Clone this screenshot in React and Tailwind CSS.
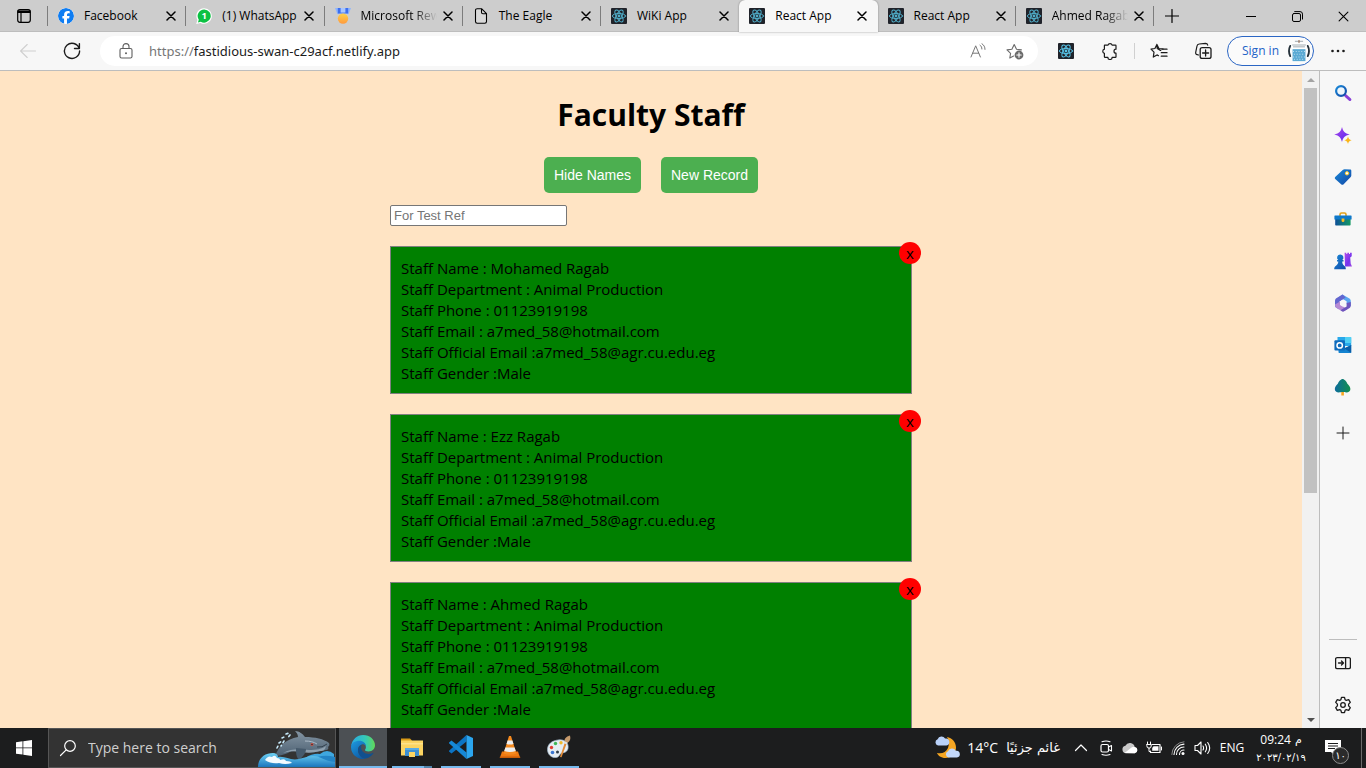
import React, { useState } from "react";
import { FaFacebook } from "react-icons/fa6";

/* ---------- small shared glyphs ---------- */

const Svg = ({ size = 20, box = "0 0 20 20", children, className = "" }) => (
  <svg
    width={size}
    height={size}
    viewBox={box}
    fill="none"
    stroke="currentColor"
    strokeLinecap="round"
    strokeLinejoin="round"
    aria-hidden="true"
    className={`shrink-0 ${className}`}
  >
    {children}
  </svg>
);

const Cross = ({ size = 10, width = 1.5 }) => (
  <Svg size={size} box="0 0 10 10">
    <path d="M1 1l8 8M9 1l-8 8" strokeWidth={width} />
  </Svg>
);

const ReactMark = ({ color = "#50adc8" }) => (
  <Svg size={16} box="0 0 16 16">
    <rect width="16" height="16" rx="1" fill="#20232a" stroke="none" />
    <g stroke={color} strokeWidth="1">
      <ellipse cx="8" cy="8" rx="6.6" ry="2.6" />
      <ellipse cx="8" cy="8" rx="6.6" ry="2.6" transform="rotate(60 8 8)" />
      <ellipse cx="8" cy="8" rx="6.6" ry="2.6" transform="rotate(120 8 8)" />
    </g>
    <circle cx="8" cy="8" r="1.4" fill={color} stroke="none" />
  </Svg>
);

const WhatsAppMark = () => (
  <Svg size={16} box="0 0 16 16">
    <path d="M8.1 0.2a7.8 7.8 0 1 1-3.7 14.7L0.2 15.9l1.2-4A7.8 7.8 0 0 1 8.1.2z" fill="#fff" stroke="none" />
    <path d="M8.2 1.4a6.6 6.6 0 1 1-3.4 12.3l-2.9.7.9-2.7A6.6 6.6 0 0 1 8.2 1.4z" fill="#0cc143" stroke="none" />
    <text x="8.1" y="11.3" textAnchor="middle" fontSize="9.5" fontWeight="700" fontFamily="Open Sans, sans-serif" fill="#fff" stroke="none">
      1
    </text>
  </Svg>
);

const MedalMark = () => (
  <Svg size={16} box="0 0 16 16">
    <defs>
      <linearGradient id="medal" x1="0" y1="0" x2="0" y2="1">
        <stop offset="0" stopColor="#ffd24a" />
        <stop offset="1" stopColor="#ff9a3d" />
      </linearGradient>
    </defs>
    <g stroke="none">
      <path d="M0 0h4.500v6L2.400 6z" fill="#8fb6ff" />
      <path d="M16 0h-4.500v6h2.100z" fill="#8fb6ff" />
      <path d="M2.800 0h10.400v5.500H2.800z" fill="#3d6fee" />
      <path d="M5.600 0h4.800v4.600H5.600z" fill="#a9c6ff" />
      <circle cx="8" cy="10.600" r="5.200" fill="url(#medal)" />
    </g>
  </Svg>
);

const PageMark = () => (
  <Svg size={16} box="0 0 16 16">
    <path d="M8.500.7H4.200C3.200.7 2.500 1.400 2.500 2.400v11.200c0 1 .7 1.700 1.700 1.700h7.600c1 0 1.700-.7 1.700-1.700V5.700zM8.500.7v3.600c0 .8.600 1.400 1.400 1.400h3.600" strokeWidth="1.100" fill="#d9d9d9" />
  </Svg>
);

/* ---------- browser chrome ---------- */

const tabs = [
  { title: "Facebook", icon: <FaFacebook size={16} color="#0f7df2" className="shrink-0 rounded-full bg-white" /> },
  { title: "(1) WhatsApp", icon: <WhatsAppMark /> },
  { title: "Microsoft Rew", icon: <MedalMark />, fade: true },
  { title: "The Eagle", icon: <PageMark /> },
  { title: "WiKi App", icon: <ReactMark /> },
  { title: "React App", icon: <ReactMark />, active: true },
  { title: "React App", icon: <ReactMark />, noDivider: true },
  { title: "Ahmed Ragab", icon: <ReactMark />, fade: true },
];

function Tab({ title, icon, active, fade, noDivider }) {
  return (
    <li
      className={`relative flex h-8 min-w-0 flex-1 items-center pl-[10px] ${
        active ? "z-10 rounded-t-md bg-[#f7f7f7] shadow-[0_0_2px_rgba(0,0,0,0.4)]" : "shadow-[inset_0_-1px_0_#bdbdbd]"
      }`}
    >
      {!active && !noDivider && <span className="absolute -left-px top-[6px] h-5 w-px bg-[#7c7c7c]" />}
      <a href="#tab" className="flex min-w-0 items-center gap-[10px]">
        {icon}
        <span
          className={`w-20 whitespace-nowrap text-[12px] leading-4 ${
            fade ? "[mask-image:linear-gradient(to_right,#000_65%,transparent_95%)]" : ""
          }`}
        >
          {title}
        </span>
      </a>
      <button aria-label={`Close ${title}`} className="ml-[2px]">
        <Cross />
      </button>
    </li>
  );
}

function TabStrip() {
  return (
    <header className="flex h-8 shrink-0 bg-[#cdcdcd] text-black">
      <button aria-label="Tab actions" className="flex w-12 shrink-0 items-center justify-center shadow-[inset_0_-1px_0_#bdbdbd]">
        <Svg size={14} box="0 0 14 14">
          <rect x="0.700" y="0.700" width="12.600" height="12.600" rx="2.200" strokeWidth="1.200" />
          <path d="M1 2.200h12M1 3.400h12" strokeWidth="1.300" />
          <path d="M4 4v9" strokeWidth="1.200" />
        </Svg>
      </button>
      <ul className="flex w-[1106px] shrink">
        {tabs.map((t, i) => (
          <Tab key={i} {...t} />
        ))}
      </ul>
      <div className="flex flex-1 items-center justify-between shadow-[inset_0_-1px_0_#bdbdbd]">
        <button aria-label="New tab" className="relative flex h-8 w-9 items-center justify-center">
          <span className="absolute -left-px top-[6px] h-5 w-px bg-[#7c7c7c]" />
          <Svg size={14} box="0 0 14 14">
            <path d="M7 .5v13M.5 7h13" strokeWidth="1.200" />
          </Svg>
        </button>
        <div className="flex">
          <button aria-label="Minimize" className="flex h-8 w-[46px] items-center justify-center">
            <Svg size={10} box="0 0 10 10">
              <path d="M0 5.500h10" strokeWidth="1" />
            </Svg>
          </button>
          <button aria-label="Restore" className="flex h-8 w-[46px] items-center justify-center">
            <Svg size={11} box="0 0 11 11">
              <rect x="0.500" y="2.500" width="8" height="8" rx="1.500" />
              <path d="M2.700.6h5.300a2.500 2.500 0 0 1 2.500 2.500v5" />
            </Svg>
          </button>
          <button aria-label="Close window" className="flex h-8 w-[46px] items-center justify-center">
            <Cross size={11} width={1} />
          </button>
        </div>
      </div>
    </header>
  );
}

const IconButton = ({ label, className = "", children }) => (
  <button aria-label={label} className={`flex h-[30px] w-11 shrink-0 items-center justify-center ${className}`}>
    {children}
  </button>
);

function Toolbar() {
  const [url, setUrl] = useState("fastidious-swan-c29acf.netlify.app");
  return (
    <nav className="flex h-[39px] shrink-0 items-center border-b border-[#bdbdbd] bg-[#f7f7f7] pl-[6px] text-[#1b1b1b]">
      <IconButton label="Back" className="text-[#cfcfcf]">
        <Svg size={16} box="0 0 16 16">
          <path d="M15.500 8H.6M7.200 1.500L.6 8l6.600 6.500" strokeWidth="1.100" />
        </Svg>
      </IconButton>
      <IconButton label="Refresh">
        <Svg size={18} box="0 0 18 18">
          <path d="M16.200 6.400A7.600 7.600 0 1 0 16.600 9M16.400 1.600v4.900h-4.900" strokeWidth="1.400" />
        </Svg>
      </IconButton>
      <div className="ml-[6px] flex h-[30px] flex-1 items-center rounded-full bg-white pl-[18px] pr-[14px] font-['Noto_Sans','Open_Sans',sans-serif]">
        <Svg size={16} box="0 0 16 16" className="text-[#5f5f5f]">
          <rect x="2" y="5.500" width="12" height="9.500" rx="1.600" strokeWidth="1.100" />
          <path d="M5 5.300V3.600a3 3 0 0 1 6 0v1.700" strokeWidth="1.100" />
          <circle cx="8" cy="10.200" r="1" fill="currentColor" stroke="none" />
        </Svg>
        <label htmlFor="address" className="ml-[15px] text-[13px] leading-5 text-[#767676]">
          https://
        </label>
        <input
          id="address"
          value={url}
          onChange={(e) => setUrl(e.target.value)}
          className="min-w-0 flex-1 bg-transparent text-[13px] leading-5 text-[#1b1b1b] outline-none"
        />
        <button aria-label="Read aloud" className="text-[#767676]">
          <Svg size={16} box="0 0 16 16">
            <path d="M1 14L5.700 2.800 10.400 14M2.700 10.200h6M10 2.200c1.300.9 1.900 2 1.900 3.800M12 .8c2 1.300 3 3.100 3 5.600" strokeWidth="1" />
          </Svg>
        </button>
        <button aria-label="Add to favorites" className="ml-5 text-[#6b6b6b]">
          <Svg size={18} box="0 0 18 18">
            <path d="M7.600 14l-3.800 2 .8-4.700L1 7.900l4.900-.7L8.200 2.600l2.300 4.600 4.900.7" strokeWidth="1.100" />
            <circle cx="13" cy="13" r="4.400" fill="#6b6b6b" stroke="none" />
            <path d="M13 10.800v4.400M10.800 13h4.400" stroke="#fff" strokeWidth="1.100" />
          </Svg>
        </button>
      </div>
      <IconButton label="React Developer Tools" className="ml-[6px]">
        <ReactMark color="#58c4e8" />
      </IconButton>
      <IconButton label="Extensions" className="mr-[2px]">
        <Svg size={18} box="0 0 18 18">
          <path d="M3.500 3.200H7a2.100 2.100 0 0 1 4.100 0h3.300c.4 0 .6.300.6.600v3.400a1.900 1.900 0 0 0 0 4v3.500c0 .4-.3.700-.7.700h-3.200a2.100 2.100 0 0 1-4.200 0H4.100c-.4 0-.7-.3-.7-.7v-3.400a2.100 2.100 0 0 1 0-4.100V3.800z" strokeWidth="1.200" />
        </Svg>
      </IconButton>
      <span className="h-4 w-px bg-[#d0d0d0]" />
      <IconButton label="Favorites" className="ml-[2px]">
        <Svg size={18} box="0 0 18 18">
          <path d="M10.800 8.300h-.7L7.200 6.500 6.900 2.400 4.900 6.500 1 7.100l3 3.100-.7 4.900 3.700-2.200 1.500.8M6.900 2.400l2 4.100 4.300.5" strokeWidth="1.200" />
          <path d="M12 7.200h5M11.300 10.700h5.700M11.300 14.200h5.700" strokeWidth="1.300" />
        </Svg>
      </IconButton>
      <IconButton label="Collections">
        <Svg size={18} box="0 0 18 18">
          <path d="M4.500 13l-1.300-.3a2 2 0 0 1-1.500-2.400L3 4c.2-1.200 1-1.900 2.200-2l6.300-.6c1.300 0 2 .7 2.200 1.700" strokeWidth="1.200" />
          <rect x="6.200" y="5.600" width="10.800" height="10.800" rx="2" strokeWidth="1.300" />
          <path d="M11.600 8v6M8.600 11h6" strokeWidth="1.300" />
        </Svg>
      </IconButton>
      <button className="ml-[2px] flex h-[30px] w-[87px] shrink-0 items-center rounded-full border border-[#2b66c4] bg-[#fbfbfb] pl-[14px] pr-[2px] text-[12px] text-[#2463c8]">
        <span className="flex-1 whitespace-nowrap text-left">Sign in</span>
        <Svg size={24} box="0 0 26 26">
          <path d="M3.500 7.500Q.8 13 3.500 18.500M22.500 7.500Q25.200 13 22.500 18.500" stroke="#26323b" strokeWidth="2" />
          <path d="M5 4.500h16v20H5z" fill="#fff" stroke="none" />
          <path d="M9 2.500h8M6 6.500h14M7 8.500h12" stroke="#9aa5ab" strokeWidth="1" />
          <path d="M13 1.500v2.500" stroke="#8d5b3d" />
          <path d="M6 11h14v13H6z" fill="#5aa9d3" stroke="none" />
          <path d="M6.500 13.500h13M7.500 16.500h12M6.500 19.500h13M7.500 22h12" stroke="#cfe8f5" strokeWidth="1" strokeDasharray="1 2" strokeLinecap="butt" />
        </Svg>
      </button>
      <button aria-label="Settings and more" className="flex h-[30px] w-[52px] items-center pl-[17px]">
        <Svg size={14} box="0 0 14 14">
          <g fill="currentColor" stroke="none">
            <circle cx="1.500" cy="7" r="1.300" />
            <circle cx="7" cy="7" r="1.300" />
            <circle cx="12.500" cy="7" r="1.300" />
          </g>
        </Svg>
      </button>
    </nav>
  );
}

/* ---------- page ---------- */

const staff = [
  { name: "Mohamed Ragab" },
  { name: "Ezz Ragab" },
  { name: "Ahmed Ragab" },
];

function StaffCard({ name, onRemove }) {
  return (
    <article className="relative mt-5 border border-[#808080] bg-[#008000] px-[10px] pb-[9px] pt-[11px] text-[15px] leading-[21px] text-black">
      <p>Staff Name : {name}</p>
      <p>Staff Department : Animal Production</p>
      <p>Staff Phone : 01123919198</p>
      <p>Staff Email : a7med_58@hotmail.com</p>
      <p>Staff Official Email :a7med_58@agr.cu.edu.eg</p>
      <p>Staff Gender :Male</p>
      <button
        aria-label={`Remove ${name}`}
        onClick={onRemove}
        className="absolute -right-[10px] -top-[5px] flex size-[22px] items-center justify-center rounded-full bg-[#ff0000] text-[15px]"
      >
        x
      </button>
    </article>
  );
}

function StaffPage() {
  const [shown, setShown] = useState(true);
  const [rows, setRows] = useState(staff);
  const action = "h-9 rounded-[5px] bg-[#4caf50] px-[10px] font-['Liberation_Sans',Arial,sans-serif] text-[14px] text-white";
  return (
    <main className="min-w-0 flex-1 overflow-hidden bg-[#ffe4c4]">
      <div className="mx-auto flex w-full max-w-[522px] flex-col pt-[22px]">
        <h1 className="text-center text-[30px] font-bold leading-[44px] text-black">Faculty Staff</h1>
        <div className="mt-5 flex justify-center gap-5">
          <button className={action} onClick={() => setShown(!shown)}>
            {shown ? "Hide Names" : "Show Names"}
          </button>
          <button className={action}>New Record</button>
        </div>
        <input
          aria-label="For Test Ref"
          placeholder="For Test Ref"
          className="mt-3 h-[21px] w-[177px] rounded-[2px] border border-[#767676] bg-white px-[3px] font-['Liberation_Sans',Arial,sans-serif] text-[13px] leading-4 text-black placeholder:text-[#757575]"
        />
        {shown &&
          rows.map((r) => (
            <StaffCard key={r.name} name={r.name} onRemove={() => setRows(rows.filter((x) => x !== r))} />
          ))}
      </div>
    </main>
  );
}

function ScrollTrack() {
  return (
    <div className="flex w-[17px] shrink-0 flex-col items-center bg-[#f1f1f1]">
      <div className="flex h-[17px] items-center text-[#a3a3a3]">
        <Svg size={8} box="0 0 8 8">
          <path d="M0 6L4 2l4 4z" fill="currentColor" stroke="none" />
        </Svg>
      </div>
      <div className="w-full flex-1 px-[2px]">
        <div className="h-[65%] bg-[#c1c1c1]" />
      </div>
      <div className="flex h-[17px] items-center text-[#505050]">
        <Svg size={8} box="0 0 8 8">
          <path d="M0 2l4 4 4-4z" fill="currentColor" stroke="none" />
        </Svg>
      </div>
    </div>
  );
}

/* ---------- side bar ---------- */

const sideIcons = [
  [
    "Search",
    <>
      <path d="M11.600 11.600l4.400 4" stroke="#8a3fd6" strokeWidth="2.800" />
      <circle cx="7" cy="7" r="4.900" stroke="url(#sb-blue)" strokeWidth="2.200" fill="#eef6fb" />
    </>,
  ],
  [
    "Discover",
    <g stroke="none">
      <path d="M8 1c1.200 4.700 2.600 6.300 7.800 7.500C10.600 9.700 9.200 11.300 8 16c-1.200-4.700-2.600-6.300-7.800-7.500C5.400 7.300 6.800 5.700 8 1z" fill="url(#sb-purple)" />
      <path d="M14 10.600c.6 2.400 1.300 3.100 3.700 3.700-2.400.6-3.100 1.300-3.700 3.700-.6-2.400-1.300-3.100-3.700-3.700 2.400-.6 3.100-1.300 3.700-3.700z" fill="#f9b61b" />
    </g>,
  ],
  [
    "Shopping",
    <g stroke="none">
      <path d="M10.500 1.200l5.600.3c.8 0 1.200.5 1.200 1.200v4.800c0 .6-.2 1-.6 1.400l-7.300 7.500c-.6.600-1.400.6-2 0L1.200 11c-.6-.6-.5-1.400 0-1.900L9 1.800c.4-.4.900-.6 1.500-.6z" fill="url(#sb-blue)" />
      <circle cx="13" cy="5.300" r="1.700" fill="#fff" stroke="#f8c928" />
    </g>,
  ],
  [
    "Tools",
    <g stroke="none">
      <path d="M6 6V4.500C6 3.400 6.600 3 7.500 3h3c.9 0 1.500.4 1.500 1.500V6" fill="none" stroke="#e3a11b" strokeWidth="1.600" />
      <path d="M1.200 8h15.400v6.400c0 .6-.4 1-1 1H2.200c-.6 0-1-.4-1-1z" fill="url(#sb-teal)" />
      <path d="M1 5.500h16c.4 0 .6.300.6.600v3.400H.4V6.100c0-.4.200-.6.600-.6z" fill="#0f78c9" />
      <path d="M7.600 8.400h2.800v2.300a1.400 1.400 0 0 1-2.800 0z" fill="#f9bd23" />
    </g>,
  ],
  [
    "Games",
    <g stroke="none">
      <path d="M10.600.8h1.700v1.300h1V.8h1.700v1.300h1V.8h1.700v3.500l-1.500 1.200.5 6 1.300 3h-7z" fill="url(#sb-purple)" />
      <path d="M6.300 2.400a3.100 3.100 0 0 1 2 5.500h1.200v1.600H8.200c0 2 .6 3.200 2.300 4.400.9.600 1.300 1.400 1.300 3.300H.2c0-1.900.5-2.700 1.500-3.300 1.700-1.200 2.600-2.400 2.600-4.400H3V7.900h1.200a3.100 3.100 0 0 1 2.100-5.500z" fill="url(#sb-blue)" />
    </g>,
  ],
  [
    "Microsoft 365",
    <g stroke="none">
      <path d="M8.500.6l6.500 3.700c1.200.7 1.800 1.600 1.800 2.900v5L12.600 9.600V7.200L9 5.200 5 7.500 4.300 3.400z" fill="#5aa5f0" />
      <path d="M8.500.6L2.700 4.100C1.500 4.800 1 5.700 1 7v4.200c0 1.200.6 2.200 1.700 2.900l2.600 1.400V7.400l6.400-3.800z" fill="#6366cf" />
      <path d="M1 10.500c0 1.600.6 2.800 1.700 3.500L8 17.300c.7.400 1.300.4 2 0l3.500-2L6 10.500V7.600z" fill="#b68ad4" />
      <path d="M16.800 8v3.400c0 1.200-.5 2.100-1.600 2.800L10 17.300c-.7.400-1.300.4-2 0l-1.500-1 6.100-3.900V9z" fill="#6d56bd" />
      <path d="M9 5.800l3 1.700v3.600l-3 1.700-3-1.700V7.500z" fill="#f7f7f7" />
    </g>,
  ],
  [
    "Outlook",
    <g stroke="none">
      <path d="M4 1h12.500c.4 0 .7.300.7.700V10H3.500V1.500c0-.3.200-.5.500-.5z" fill="#28a8ea" />
      <path d="M11 1h6.200v6H11z" fill="#50d0f4" />
      <path d="M4.500 9l6.500 3.500L17.200 9v7c0 .6-.4 1-1 1H5.500c-.6 0-1-.4-1-1z" fill="#1483d0" />
      <path d="M17.200 9v8l-7-4.800z" fill="#0b5fa8" />
      <rect x="0.400" y="4.200" width="10.600" height="10.400" rx="1" fill="#0f6cbd" />
      <circle cx="5.700" cy="9.400" r="2.700" fill="none" stroke="#fff" strokeWidth="1.500" />
    </g>,
  ],
  [
    "Tree",
    <g stroke="none">
      <path d="M7.300 13.500h2.600V17.500H7.300z" fill="#f6a51f" />
      <path d="M8.600.9c1.600 0 4.200 2.700 4.600 4.600 1.500 1.400 3.200 3.700 3.200 5.500 0 2-1.700 3.500-4 3.500-1.500 0-2.300-.4-3.800-.4s-2.300.4-3.800.4c-2.300 0-4-1.500-4-3.500 0-1.800 1.700-4.100 3.200-5.500C4.400 3.600 7 .9 8.600.9z" fill="url(#sb-green)" />
    </g>,
  ],
];

function SideBar() {
  return (
    <aside className="flex w-[47px] shrink-0 flex-col items-center border-l border-[#bdbdbd] bg-[#f7f7f7] pt-[1px] text-[#1b1b1b]">
      <svg width="0" height="0" className="absolute" aria-hidden="true">
        <defs>
          <linearGradient id="sb-blue" x1="0" y1="0" x2="1" y2="1">
            <stop offset="0" stopColor="#1a8ad8" />
            <stop offset="1" stopColor="#1347a6" />
          </linearGradient>
          <linearGradient id="sb-purple" x1="0" y1="0" x2="1" y2="1">
            <stop offset="0" stopColor="#b44be8" />
            <stop offset="0.600" stopColor="#7433ee" />
            <stop offset="1" stopColor="#a34be2" />
          </linearGradient>
          <linearGradient id="sb-teal" x1="0" y1="0" x2="1" y2="0">
            <stop offset="0" stopColor="#0d4f98" />
            <stop offset="1" stopColor="#149a63" />
          </linearGradient>
          <linearGradient id="sb-green" x1="0" y1="0" x2="1" y2="0">
            <stop offset="0" stopColor="#0d6c9c" />
            <stop offset="1" stopColor="#12904e" />
          </linearGradient>
        </defs>
      </svg>
      {sideIcons.map(([label, art]) => (
        <button key={label} aria-label={label} className="flex h-[42px] w-full items-center justify-center">
          <Svg size={18} box="0 0 18 18">
            {art}
          </Svg>
        </button>
      ))}
      <button aria-label="Add" className="mt-1 flex h-[42px] w-full items-center justify-center">
        <Svg size={14} box="0 0 14 14">
          <path d="M7 1v12M1 7h12" strokeWidth="1" />
        </Svg>
      </button>
      <div className="flex-1" />
      <span className="h-px w-7 bg-[#bdbdbd]" />
      <button aria-label="Hide sidebar" className="mt-[2px] flex h-[42px] w-full items-center justify-center">
        <Svg size={16} box="0 0 16 16">
          <rect x="0.600" y="2.600" width="14.800" height="11" rx="1.500" strokeWidth="1.300" />
          <path d="M10.600 3v10.200M3.500 8h4.800M6.500 6l2 2-2 2" strokeWidth="1.300" />
        </Svg>
      </button>
      <button aria-label="Sidebar settings" className="mb-[2px] flex h-[42px] w-full items-center justify-center">
        <Svg size={18} box="0 0 18 18">
          <circle cx="9" cy="9" r="2.300" strokeWidth="1.300" />
          <path d="M7.500 1.400h3l.6 2.300 1.200.7 2.400-.7 1.600 2.700-1.700 1.700v1.800l1.700 1.700-1.600 2.700-2.400-.7-1.200.7-.6 2.300h-3l-.6-2.300-1.200-.7-2.400.7-1.600-2.700 1.700-1.700V8.100L1.700 6.400l1.600-2.700 2.400.7 1.200-.7z" strokeWidth="1.300" />
        </Svg>
      </button>
    </aside>
  );
}

/* ---------- task bar ---------- */

const Dolphin = () => (
  <svg width="78" height="38" viewBox="0 0 78 38" fill="none" aria-hidden="true" className="shrink-0">
    <defs>
      <linearGradient id="sea" x1="0" y1="0" x2="0" y2="1">
        <stop offset="0" stopColor="#6fd3f5" />
        <stop offset="1" stopColor="#1b76bd" />
      </linearGradient>
      <linearGradient id="skin" x1="0" y1="0" x2="0" y2="1">
        <stop offset="0" stopColor="#8495a3" />
        <stop offset="1" stopColor="#4d6173" />
      </linearGradient>
    </defs>
    <path d="M48 29q8-5 15-4 7-6 14 0v13H42z" fill="#3fa7df" />
    <path d="M52 32q12-8 26-4v10H50z" fill="#2384c6" />
    <path d="M18 27C22 17 29 10 41 8c0-3-2-5-3-6 4 0 8 3 10 6 10 0 19 2 24 6 1 2 0 3-1 4 1 1 0 3-2 3-9 2-15 3-20 2-7 0-13-2-18 1-5 2-9 3-13 3z" fill="url(#skin)" />
    <path d="M26 24c8-5 18-4 26-3 7 0 13-1 17-4-1 4-2 5-6 5-7 2-13 2-18 1-7-1-12-1-19 1z" fill="#8fa0ae" />
    <path d="M39 19c0 5 0 9 3 12 5-4 7-8 7-11z" fill="#465a6c" />
    <path d="M48 12c5 0 9 1 12 3" stroke="#aab9c6" strokeWidth="1" />
    <circle cx="55" cy="15.500" r="1.400" fill="#d8503e" />
    <circle cx="55" cy="15.500" r="0.700" fill="#16202b" />
    <path d="M60 18q5 1 10-3" stroke="#34424f" />
    <path d="M1 38C1 29 8 24 16 24c3 0 5 2 5 4 8-1 12 4 21 2 5-1 9-3 14-3 8 0 11 5 22 6v5z" fill="url(#sea)" />
    <path d="M8 31q3-5 7-3 3-3 5 1 3 0 3 2 5-2 6 1 5 0 6 2-7 2-13 0-8 1-14-3z" fill="#f3fbff" />
    <path d="M29 5l3-1M25 9l4-2M22 14l3-2M20 19l2-4M33 6l-3 4M27 12l-3 5" stroke="#c6e9fa" strokeWidth="1.600" strokeLinecap="round" strokeDasharray="2 3" />
  </svg>
);

const EdgeMark = () => (
  <svg width="24" height="24" viewBox="0 0 24 24" aria-hidden="true">
    <defs>
      <linearGradient id="eg-top" x1="0" y1="0.500" x2="1" y2="0.500">
        <stop offset="0" stopColor="#2aa9e6" />
        <stop offset="0.600" stopColor="#35c9b6" />
        <stop offset="1" stopColor="#62d957" />
      </linearGradient>
      <linearGradient id="eg-mid" x1="0" y1="0" x2="0.700" y2="1">
        <stop offset="0" stopColor="#1f9be0" />
        <stop offset="1" stopColor="#0c59a4" />
      </linearGradient>
    </defs>
    <path d="M.2 11C1 4.500 6 0 12.200 0 19 0 24 4.900 24 10.300c0 3.900-3 6.200-6.300 6.200-2.700 0-3.700-.8-3.700-1.500 0-.6.900-1 .9-2.900 0-2.700-2.800-5.300-6.600-5.300-4.200 0-7 1.700-8.100 4.200z" fill="url(#eg-top)" />
    <path d="M0 12C.3 8 4 5.800 8.300 5.800c3.900 0 6.700 2.600 6.700 5.700-1-1.800-2.600-2.300-4-2.100-2.800.4-4.200 3.200-4 6 .3 4.200 3.500 7.700 7.600 8.300A12 12 0 0 1 0 12z" fill="url(#eg-mid)" />
    <path d="M11 9.400C8.400 10.200 7 12.600 7 15.200c.2 4.500 4 8.400 8 8.400 3.200-.8 5.900-2.700 7.400-5.300.2-.4-.1-.6-.5-.4-5.200 2.400-11.100.3-11.700-4.600-.2-1.500.1-3 .8-3.900z" fill="#10508f" />
  </svg>
);

const FolderMark = () => (
  <svg width="24" height="24" viewBox="0 0 24 24" aria-hidden="true">
    <path d="M1 3.500h9l2 2v3H1z" fill="#d99b16" />
    <path d="M1 5.500h22v15H1z" fill="#fcd462" />
    <path d="M1 8h22v1.500H1z" fill="#ffe28a" />
    <path d="M5 13h14v8H5z" fill="#3e8fd0" />
    <path d="M9 17h6v5H9z" fill="#fcd462" />
    <path d="M5 13h14v2H5z" fill="#59abe5" />
  </svg>
);

const CodeMark = () => (
  <svg width="24" height="24" viewBox="0 0 24 24" aria-hidden="true">
    <path d="M17.500 0v6.500L2.500 18.600.3 16.800c-.4-.4-.4-.9 0-1.300z" fill="#0b74c4" />
    <path d="M17.500 24v-6.500L2.500 5.400.3 7.200c-.4.400-.4.900 0 1.300z" fill="#1688d6" />
    <path d="M17.500 0L24 3v18l-6.500 3z" fill="#2ba6ef" />
  </svg>
);

const ConeMark = () => (
  <svg width="24" height="24" viewBox="0 0 24 24" aria-hidden="true">
    <path d="M4 16.500h16l2 6H2z" fill="#ef7a12" />
    <path d="M2 21.500h20l.3 1.500H1.700z" fill="#c95d08" />
    <path d="M11 1h2l5.500 17.500q-6.500 2.500-13 0z" fill="#f58a1f" />
    <path d="M9.600 5.500h4.800l1.100 3.500q-3.500 1-7 0zM7.400 12.500h9.200l1.200 3.600q-5.800 1.800-11.600 0z" fill="#eceff1" />
  </svg>
);

const PaletteMark = () => (
  <svg width="24" height="24" viewBox="0 0 24 24" aria-hidden="true">
    <path d="M11 5c7-1 11 3 10 8.500-1 4-4 4-6 4.500-3 .8-2 4-6 4.500-4.500.5-8.500-3-8.500-8C.5 9 5 5.700 11 5z" fill="#e6edf3" stroke="#a3bbd0" strokeWidth="0.700" />
    <circle cx="8.500" cy="8.500" r="1.700" fill="#3db557" />
    <circle cx="4.500" cy="12.500" r="1.700" fill="#e23c32" />
    <circle cx="14" cy="7.700" r="1.700" fill="#f0b92d" />
    <circle cx="5.500" cy="17.500" r="1.800" fill="#3976d1" />
    <circle cx="10.500" cy="17" r="1.500" fill="#2c3b4a" />
    <path d="M13 22l5-15 2 .8-5.500 14.500z" fill="#e28b36" />
    <path d="M17.600 7.500C17 3 19 2 23 .5c1 3.500 0 6-3 7.800z" fill="#c69a6c" />
    <path d="M17.400 6.300l3 1.200-.7 1.800-2.900-1z" fill="#dfe3e6" />
  </svg>
);

const apps = [
  { label: "Microsoft Edge", art: <EdgeMark />, open: true },
  { label: "File Explorer", art: <FolderMark />, stacked: true },
  { label: "Visual Studio Code", art: <CodeMark /> },
  { label: "VLC media player", art: <ConeMark /> },
  { label: "Paint", art: <PaletteMark /> },
];

const arabic = "font-['DejaVu_Sans',sans-serif]";

function TrayIcons() {
  return (
    <div className="flex items-center gap-2 text-white">
      <button aria-label="Meet now">
        <Svg size={16} box="0 0 16 16">
          <rect x="3" y="4.500" width="7.500" height="7.500" rx="1.500" strokeWidth="1.200" />
          <path d="M10.500 7l3-1.500v5.500l-3-1.500M4 1.800Q8 .2 12 1.800M4 14.500q4 1.500 8 0" strokeWidth="1.100" />
        </Svg>
      </button>
      <button aria-label="OneDrive">
        <Svg size={16} box="0 0 16 16">
          <path d="M4 13.200a3.800 3.800 0 0 1-.6-7.500 5 5 0 0 1 9.300 1.200 3.200 3.200 0 0 1 0 6.300z" fill="#c9c9c9" stroke="none" />
          <path d="M2.500 13l7-5.500q2-1.300 3.200-.6a3.200 3.200 0 0 1 0 6.300z" fill="#fff" stroke="none" />
        </Svg>
      </button>
      <button aria-label="Battery">
        <Svg size={16} box="0 0 16 16">
          <path d="M6 4.500h8v8H4.500V11" strokeWidth="1.200" />
          <path d="M7.500 6.200h5v4.600H6.200V8z" fill="currentColor" stroke="none" />
          <path d="M15.500 7v3M1.500 2v2.500M4.500 2v2.500M.8 4.500h4.400V6a2 2 0 0 1-4.400 0zM3 8v3.500h1" strokeWidth="1" />
        </Svg>
      </button>
      <button aria-label="Network">
        <Svg size={16} box="0 0 16 16">
          <path d="M9.500 14.500a4.500 4.500 0 0 1 4.500-4.500M6.500 14.500A7.500 7.500 0 0 1 14 7M4 14.500a10.500 10.500 0 0 1 10-10.400" strokeWidth="1.100" />
          <path d="M1.800 14.500A12.800 12.800 0 0 1 14 1.800" stroke="#8a8a8a" strokeWidth="1" />
          <circle cx="13" cy="13.500" r="1.500" fill="currentColor" stroke="none" />
        </Svg>
      </button>
      <button aria-label="Volume">
        <Svg size={18} box="0 0 18 18">
          <path d="M1 6.500h2.500L7 3v12l-3.500-3.500H1zM9 7q1.200 2 0 4M11.300 5.200q2.600 3.800 0 7.600M13.700 3.500q4 5.500 0 11" strokeWidth="1.100" />
        </Svg>
      </button>
    </div>
  );
}

function TaskBar() {
  return (
    <footer className="flex h-10 shrink-0 items-stretch bg-[#1c1d1e] text-white">
      <button aria-label="Start" className="flex w-12 shrink-0 items-center justify-center">
        <svg width="16" height="16" viewBox="0 0 16 16" fill="#fff" aria-hidden="true">
          <path d="M0 2.200l6.500-.9v6.200H0zM7.300 1.200L16 0v7.500H7.300zM0 8.300h6.500v6.300L0 13.700zM7.300 8.300H16V16l-8.700-1.200z" />
        </svg>
      </button>
      <div className="flex w-[288px] shrink-0 items-center border border-[#555555] bg-[#333333] pl-[10px]">
        <label htmlFor="taskbar-search">
          <Svg size={18} box="0 0 18 18">
            <circle cx="11" cy="7" r="5.300" strokeWidth="1.200" />
            <path d="M7.200 10.800L1.500 16.500" strokeWidth="1.200" />
          </Svg>
        </label>
        <input
          id="taskbar-search"
          aria-label="Type here to search"
          placeholder="Type here to search"
          className="ml-[11px] min-w-0 flex-1 bg-transparent text-[14px] leading-5 text-white outline-none placeholder:text-[#cfcfcf]"
        />
        <Dolphin />
      </div>
      <div className="ml-[3px] flex gap-px">
        {apps.map(({ label, art, open, stacked }) => (
          <button
            key={label}
            aria-label={label}
            className={`flex w-12 flex-col items-center ${open ? "bg-[#4c5054]" : ""}`}
          >
            <span className="flex flex-1 items-center">{art}</span>
            <span className={`flex h-[2px] justify-end bg-[#76b9ed] ${open ? "w-12" : "w-10"}`}>
              {stacked && <span className="w-2 bg-[#5284ab]" />}
            </span>
          </button>
        ))}
      </div>
      <div className="flex-1" />
      <button className="flex shrink-0 items-center text-[14px] leading-5">
        <svg width="26" height="24" viewBox="0 0 26 24" aria-hidden="true">
          <path d="M13 1c5 1 9 5 9 10.500C22 18 17 22 11.500 22 7 22 4 19.500 3 17c5 1 9-.5 11-5 1.500-4 .8-8-1-11z" fill="#f5a623" />
          <path d="M4 9.500a3.300 3.300 0 0 1-.4-6.300 4.200 4.200 0 0 1 7.500-.6 3.500 3.500 0 0 1 1.400 6.900z" fill="#b9d1f8" />
          <path d="M14.500 21.500a3.300 3.300 0 0 1-.5-6.300 4.300 4.300 0 0 1 7.800-.4 3.400 3.400 0 0 1 1.200 6.700z" fill="#c3d8fa" />
        </svg>
        <span className="ml-[7px]">14°C</span>
        <span dir="rtl" className={`ml-2 text-[13px] ${arabic}`}>
          غائم جزئيًا
        </span>
      </button>
      <button aria-label="Show hidden icons" className="flex w-[38px] items-center justify-center pl-1">
        <Svg size={14} box="0 0 14 14">
          <path d="M1.500 9.500L7 4l5.500 5.500" strokeWidth="1.200" />
        </Svg>
      </button>
      <TrayIcons />
      <button className="w-9 pl-1 text-center text-[12px]">ENG</button>
      <button className="flex w-[66px] flex-col items-center justify-center gap-px text-[12px] leading-[17px]">
        <span className="flex items-center gap-1 whitespace-nowrap">
          09:24 <span className={`text-[11px] ${arabic}`}>م</span>
        </span>
        <span dir="ltr" className={`whitespace-nowrap text-[10px] ${arabic}`}>
          ٢٠٢٣/٠٢/١٩
        </span>
      </button>
      <button aria-label="Notifications" className="relative flex w-[47px] items-center pl-[11px]">
        <svg width="16" height="16" viewBox="0 0 16 16" aria-hidden="true">
          <path d="M0 0h16v12h-6v4l-4-4H0z" fill="#fff" />
          <path d="M3 3.500h10M3 6h10M3 8.500h7" stroke="#1c1d1e" />
        </svg>
        <span className={`absolute left-[18px] top-[19px] flex size-[17px] items-center justify-center rounded-full border border-[#8d8d8d] bg-[#2b2b2b] text-[10px] leading-none ${arabic}`}>
          ١٠
        </span>
      </button>
      <span className="mr-1 w-px bg-[#6a6a6a]" />
    </footer>
  );
}

export default function App() {
  return (
    <div className="flex h-screen flex-col overflow-hidden font-['Open_Sans','Noto_Sans',sans-serif]">
      <TabStrip />
      <Toolbar />
      <div className="flex min-h-0 flex-1">
        <StaffPage />
        <ScrollTrack />
        <SideBar />
      </div>
      <TaskBar />
    </div>
  );
}
